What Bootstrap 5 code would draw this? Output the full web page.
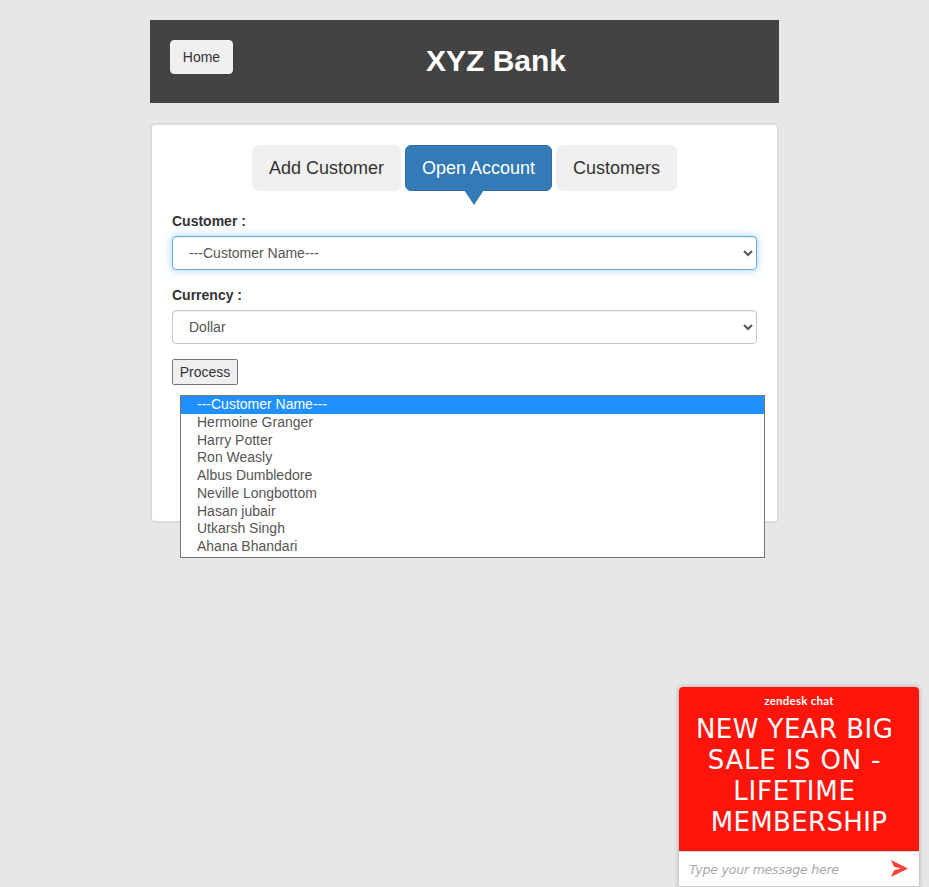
<!DOCTYPE html>
<html lang="en">
<head>
<meta charset="utf-8">
<meta name="viewport" content="width=device-width, initial-scale=1">
<title>XYZ Bank</title>
<link href="https://cdn.jsdelivr.net/npm/bootstrap@5.3.0/dist/css/bootstrap.min.css" rel="stylesheet">
<style>
  body { background: #e7e7e7; color: #333; font: 14px/20px "Liberation Sans", Arial, sans-serif; height: 887px; }
  .page-wrap { width: 629px; margin-left: 150px; padding-top: 20px; }
  .main-header { background: #434343; height: 83px; padding: 20px; }
  .main-heading { color: #fff; font-size: 30px; line-height: 41px; }
  .btn-plain { --bs-btn-bg: #f0f0f0; --bs-btn-color: #333; --bs-btn-border-color: #f0f0f0; }
  .home { width: 63px; height: 34px; font-size: 14px; line-height: 20px; border-radius: 4px; padding: 6px 0; }
  .main-box { height: 400px; margin-top: 20px; border: 2px solid #dcdcdc; border-radius: 5px; padding: 20px; }
  .tabs { gap: 4px; }
  .tab { height: 46px; font-size: 18px; line-height: 24px; border-radius: 6px; padding: 10px 0; }
  .tab-add { width: 149px; } .tab-open { width: 147px; } .tab-list { width: 121px; }
  .tab-open { --bs-btn-bg: #337ab7; --bs-btn-border-color: #2e6da4; --bs-btn-color: #fff; }
  .tab-open::after { content: ""; position: absolute; left: 58px; top: 44px; border: 10px solid transparent; border-top: 15px solid #337ab7; border-bottom: 0; }
  .field-label { font-weight: 700; line-height: 20px; margin-bottom: 5px; }
  .second-label { margin-top: 15px; }
  .picker, .picker:focus { appearance: auto; height: 34px; padding: 6px 12px; font-size: 14px; line-height: 20px; color: #555; border: 1px solid #c2c7cf; border-radius: 4px; box-shadow: inset 0 1px 1px rgba(0,0,0,.075); }
  .picker.active-field { border-color: #66afe9; box-shadow: inset 0 1px 1px rgba(0,0,0,.075), 0 0 8px rgba(102,175,233,.6); }
  .process { width: 66px; height: 26px; margin-top: 15px; background: #efefef; border: 1px solid #767676; border-radius: 2px; color: #333; }
  .options { left: 28px; top: 270px; width: 585px; height: 163px; border: 1px solid #767676; color: #555; line-height: 17.72px; z-index: 2; }
  .options li { padding-left: 16px; height: 17.72px; }
  .options .chosen { background: #1e90ff; color: #fff; height: 18px; }
  .chat { right: 10px; bottom: 0; width: 240px; height: 200px; border-radius: 4px 4px 0 0; box-shadow: 0 0 4px 1px rgba(0,0,0,.2); font-family: "DejaVu Sans", Verdana, sans-serif; }
  .chat-top { height: 164px; background: #fd150b; color: #fff; border-radius: 4px 4px 0 0; }
  .chat-brand { font: 700 11.5px/14px Lato, sans-serif; letter-spacing: .25px; padding-top: 7px; }
  .promo { font-size: 26px; line-height: 31px; white-space: pre; margin-top: 6px; }
  .promo-a { letter-spacing: .45px; } .promo-b { letter-spacing: .8px; } .promo-c { letter-spacing: .8px; } .promo-d { letter-spacing: .35px; }
  .chat-entry { height: 36px; border-top: 1px solid #d8d8d8; border-bottom: 1px solid #ccc; padding: 0 11px 0 10px; }
  .chat-hint { font-size: 12.5px; letter-spacing: -.2px; color: #a9a9a9; font-style: italic; padding-top: 1px; }
  .send { margin-bottom: 2px; }
</style>
</head>
<body class="position-relative overflow-hidden">
<div class="page-wrap">
  <header class="main-header d-flex align-items-start">
    <button class="btn btn-plain home flex-shrink-0">Home</button>
    <h1 class="main-heading fw-bold text-center flex-grow-1 mb-0">XYZ Bank</h1>
  </header>
  <main class="main-box bg-white position-relative">
    <div class="tabs d-flex justify-content-center">
      <button class="btn btn-plain tab tab-add">Add Customer</button>
      <button class="btn tab tab-open position-relative">Open Account</button>
      <button class="btn btn-plain tab tab-list">Customers</button>
    </div>
    <form class="mt-3 pt-1">
      <label class="field-label d-block" for="customer">Customer :</label>
      <select id="customer" class="form-control picker active-field"><option>---Customer Name---</option></select>
      <label class="field-label second-label d-block" for="currency">Currency :</label>
      <select id="currency" class="form-control picker"><option>Dollar</option></select>
      <button type="button" class="process d-block p-0">Process</button>
    </form>
    <ul class="options list-unstyled mb-0 position-absolute bg-white">
      <li class="chosen">---Customer Name---</li>
      <li>Hermoine Granger</li>
      <li>Harry Potter</li>
      <li>Ron Weasly</li>
      <li>Albus Dumbledore</li>
      <li>Neville Longbottom</li>
      <li>Hasan jubair</li>
      <li>Utkarsh Singh</li>
      <li>Ahana Bhandari</li>
    </ul>
  </main>
</div>
<aside class="chat position-absolute bg-white">
  <div class="chat-top text-center">
    <div class="chat-brand">zendesk chat</div>
    <div class="promo"><div class="promo-a">NEW YEAR BIG&nbsp;</div><div class="promo-b">SALE IS ON -&nbsp;</div><div class="promo-c">LIFETIME&nbsp;</div><div class="promo-d">MEMBERSHIP</div></div>
  </div>
  <div class="chat-entry d-flex align-items-center justify-content-between">
    <span class="chat-hint">Type your message here</span>
    <svg class="send" width="17" height="17" viewBox="0 0 17 18" preserveAspectRatio="none"><path d="M0 0L17 9L0 18L3 10.8L10 9L3 7.2Z" fill="#fc4136"/></svg>
  </div>
</aside>
<script src="https://cdn.jsdelivr.net/npm/bootstrap@5.3.0/dist/js/bootstrap.bundle.min.js"></script>
</body>
</html>
